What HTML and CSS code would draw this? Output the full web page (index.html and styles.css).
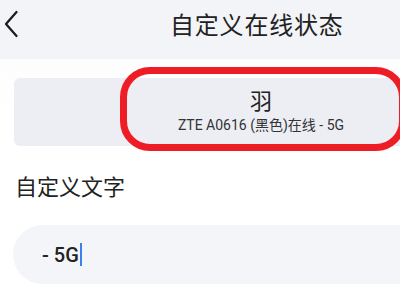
FILE: index.html
```html
<!DOCTYPE html>
<html lang="zh">
<head>
<meta charset="utf-8">
<link rel="stylesheet" href="styles.css">
</head>
<body>
<div class="screen">
  <header class="topbar">
    <svg class="back" width="16" height="28" viewBox="0 0 16 28"><path d="M13.5 2 L3 14 L13.5 26" fill="none" stroke="#1d1d1f" stroke-width="2.3" stroke-linecap="round" stroke-linejoin="round"/></svg>
    <h1 class="title">自定义在线状态</h1>
  </header>
  <div class="segment">
    <div class="tab tab-empty"></div>
    <div class="tab tab-active">
      <div class="tab-main">羽</div>
      <div class="tab-sub">ZTE A0616 (黑色)在线 - 5G</div>
    </div>
    <div class="annot"></div>
  </div>
  <div class="label">自定义文字</div>
  <div class="input"><span class="val">- 5G</span><span class="caret"></span></div>
</div>
</body>
</html>
```
FILE: styles.css
```css
html, body { margin: 0; padding: 0; background: #ffffff; }
body { font-family: "Noto Sans CJK SC", "Noto Sans", Roboto, sans-serif; width: 412px; height: 294px; overflow: hidden; }
.screen { width: 400px; height: 294px; background: linear-gradient(#fbfbfd, #ffffff 40%); overflow: hidden; }
.topbar { height: 59px; background: #f2f4f8; display: flex; align-items: flex-start; }
.back { margin: 10px 0 0 3px; }
.title { margin: 6px 0 0 151px; font-weight: 400; font-size: 24px; line-height: 36px; color: #222; letter-spacing: 0.8px; }
.segment { position: relative; margin: 19px 0 0 14px; height: 68px; background: #eceef4; border-radius: 6px 0 0 6px; display: flex; }
.tab-empty { width: 106px; }
.tab-active { flex: 1; display: flex; flex-direction: column; align-items: center; justify-content: flex-start; padding-top: 7px; padding-left: 2px; }
.tab-main { font-size: 22px; color: #222; line-height: 28px; }
.tab-sub { font-family: Roboto, "Noto Sans CJK SC", sans-serif; font-size: 14px; color: #333; line-height: 18px; margin-top: 3px; }
.annot { position: absolute; left: 106px; top: -11px; width: 272px; height: 70px; border: 7px solid #ee1c24; border-radius: 30px; }
.label { margin: 24px 0 0 15px; font-size: 22px; color: #222; line-height: 30px; }
.input { margin: 25px 0 0 13px; height: 59px; background: #f4f5f8; border-radius: 30px 0 0 30px; display: flex; align-items: center; padding-left: 29px; }
.val { font-family: Roboto, sans-serif; font-weight: 500; font-size: 20px; color: #222; }
.caret { width: 2px; height: 23px; background: #3b7ff0; margin-left: 1px; }
```
